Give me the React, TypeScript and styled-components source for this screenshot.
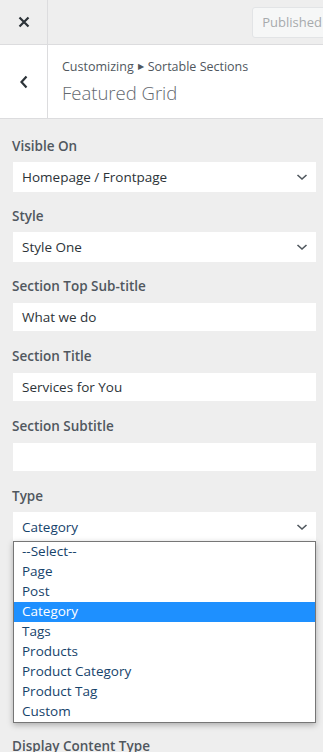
import React from "react";
import styled, { createGlobalStyle } from "styled-components";

const GlobalStyle = createGlobalStyle`
  html, body {
    margin: 0;
    padding: 0;
    background: #eeeeee;
    overflow: hidden;
  }
  body {
    font-family: "Open Sans", "Noto Sans", sans-serif;
    color: #3c434a;
  }
  * {
    box-sizing: border-box;
  }
`;

const Panel = styled.div`
  width: 323px;
  height: 752px;
  overflow: hidden;
  background: #eeeeee;
`;

const Header = styled.div`
  display: flex;
  align-items: center;
  height: 45px;
  border-bottom: 1px solid #dcdcde;
  overflow: hidden;
`;

const IconButton = styled.div`
  display: flex;
  align-items: center;
  justify-content: center;
  width: 48px;
  height: 100%;
  flex-shrink: 0;
  border-right: 1px solid #dcdcde;
  color: #3c434a;
`;

const PublishButton = styled.div`
  margin-left: auto;
  margin-right: -14px;
  flex-shrink: 0;
  height: 31px;
  padding: 0 14px 0 9px;
  display: flex;
  align-items: center;
  border: 1px solid #e2e4e6;
  border-radius: 3px;
  background: #f6f7f7;
  color: #a7aaad;
  font-size: 13px;
`;

const TitleBar = styled.div`
  display: flex;
  height: 74px;
  background: #ffffff;
  border-bottom: 1px solid #dcdcde;
`;

const TitleText = styled.div`
  display: flex;
  flex-direction: column;
  justify-content: center;
  padding-left: 14px;
  padding-top: 1px;
`;

const Crumb = styled.div`
  font-size: 12.5px;
  line-height: 18px;
  color: #50575e;
`;

const CrumbArrow = styled.span`
  display: inline-block;
  margin: 0 4px;
  font-size: 8px;
  vertical-align: 2px;
`;

const Heading = styled.div`
  font-size: 18.5px;
  font-weight: 300;
  line-height: 28px;
  color: #646970;
  margin-top: 3px;
`;

const Controls = styled.div`
  position: relative;
  padding: 17px 7px 0 13px;
`;

const Field = styled.div`
  display: flex;
  flex-direction: column;
  margin-bottom: 14px;
`;

const Label = styled.div`
  margin-left: -1px;
  font-size: 13.5px;
  font-weight: 600;
  line-height: 20px;
  color: #50575e;
  margin-bottom: 6px;
`;

const SelectBox = styled.div<{ focused?: boolean }>`
  display: flex;
  align-items: center;
  justify-content: space-between;
  height: 30px;
  padding: 0 8px 0 9px;
  background: #ffffff;
  font-size: 13.5px;
  color: ${({ focused }) => (focused ? "#16436b" : "#2c3338")};
`;

const TextInput = styled.div`
  display: flex;
  align-items: center;
  height: 28px;
  margin: 1px 0;
  padding: 0 9px;
  background: #ffffff;
  font-size: 13.5px;
  color: #2c3338;
`;

/* the options below the open list are covered, keep their room only */
const HiddenFields = styled.div`
  height: 180px;
`;

const Dropdown = styled.div`
  position: absolute;
  left: 13px;
  right: 7px;
  top: 422px;
  background: #ffffff;
  border: 1px solid #767676;
  box-shadow: 0 2px 6px rgba(0, 0, 0, 0.28);
  z-index: 5;
`;

const Option = styled.div<{ selected?: boolean }>`
  height: 20px;
  line-height: 19px;
  padding-left: 8px;
  font-size: 13.5px;
  color: ${({ selected }) => (selected ? "#ffffff" : "#16436b")};
  background: ${({ selected }) => (selected ? "#1e90ff" : "transparent")};
`;

const Chevron = () => (
  <svg width="12" height="8" viewBox="0 0 12 8">
    <polyline points="1.5,2 6,6 10.5,2" fill="none" stroke="#50575e" strokeWidth="1.6" />
  </svg>
);

const options = [
  "--Select--",
  "Page",
  "Post",
  "Category",
  "Tags",
  "Products",
  "Product Category",
  "Product Tag",
  "Custom",
];

export default function App() {
  return (
    <Panel>
      <GlobalStyle />
      <Header>
        <IconButton>
          <svg width="12" height="12" viewBox="0 0 12 12">
            <path d="M1.5 1.5 L10.5 10.5 M10.5 1.5 L1.5 10.5" stroke="#2c3338" strokeWidth="2.2" />
          </svg>
        </IconButton>
        <PublishButton>Published</PublishButton>
      </Header>
      <TitleBar>
        <IconButton>
          <svg width="10" height="14" viewBox="0 0 10 14">
            <polyline points="7.5,1.5 2.5,7 7.5,12.5" fill="none" stroke="#2c3338" strokeWidth="2.2" />
          </svg>
        </IconButton>
        <TitleText>
          <Crumb>
            Customizing<CrumbArrow>▶</CrumbArrow>Sortable Sections
          </Crumb>
          <Heading>Featured Grid</Heading>
        </TitleText>
      </TitleBar>
      <Controls>
        <Field>
          <Label>Visible On</Label>
          <SelectBox>
            Homepage / Frontpage
            <Chevron />
          </SelectBox>
        </Field>
        <Field>
          <Label>Style</Label>
          <SelectBox>
            Style One
            <Chevron />
          </SelectBox>
        </Field>
        <Field>
          <Label>Section Top Sub-title</Label>
          <TextInput>What we do</TextInput>
        </Field>
        <Field>
          <Label>Section Title</Label>
          <TextInput>Services for You</TextInput>
        </Field>
        <Field>
          <Label>Section Subtitle</Label>
          <TextInput />
        </Field>
        <Field>
          <Label>Type</Label>
          <SelectBox focused>
            Category
            <Chevron />
          </SelectBox>
        </Field>
        <HiddenFields />
        <Field>
          <Label>Display Content Type</Label>
        </Field>
        <Dropdown>
          {options.map((o) => (
            <Option key={o} selected={o === "Category"}>
              {o}
            </Option>
          ))}
        </Dropdown>
      </Controls>
    </Panel>
  );
}
